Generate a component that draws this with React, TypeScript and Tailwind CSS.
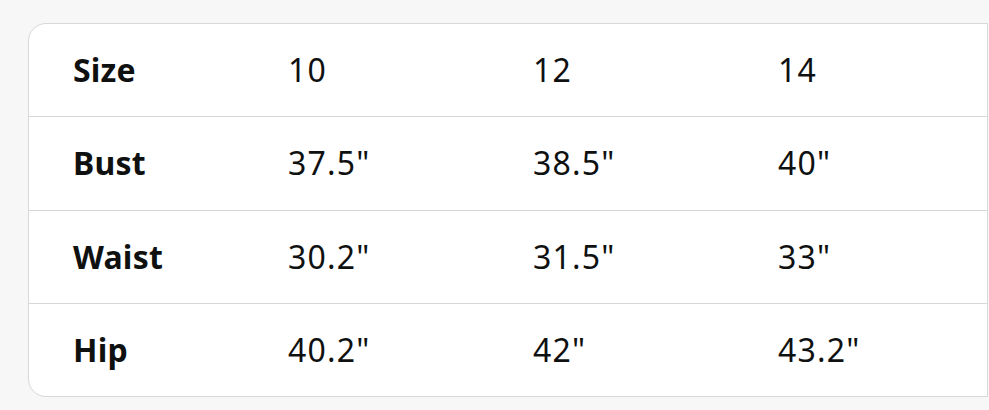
import React from "react";

const rows = [
  ["Size", "10", "12", "14"],
  ["Bust", '37.5"', '38.5"', '40"'],
  ["Waist", '30.2"', '31.5"', '33"'],
  ["Hip", '40.2"', '42"', '43.2"'],
];

export default function App() {
  return (
    <div
      className="w-[989px] h-[410px] bg-[#f7f7f7] overflow-hidden pl-[28px] pt-[23px]"
      style={{ fontFamily: '"Noto Sans", "Open Sans", sans-serif' }}
    >
      <div className="w-[960px] h-[374px] bg-white border border-[#d5d9d9] rounded-l-[18px] flex flex-col text-[#0f1111]">
        {rows.map((r, i) => (
          <div
            key={i}
            className={`flex-1 flex items-center ${i > 0 ? "border-t border-[#d5d9d9]" : ""}`}
          >
            <div className="w-[214px] pl-[44px] font-bold text-[32px] tracking-[0.2px]">{r[0]}</div>
            {r.slice(1).map((c, j) => (
              <div key={j} className="w-[245px] pl-[45px] text-[32px] tracking-[1.2px]">
                {c}
              </div>
            ))}
          </div>
        ))}
      </div>
    </div>
  );
}
